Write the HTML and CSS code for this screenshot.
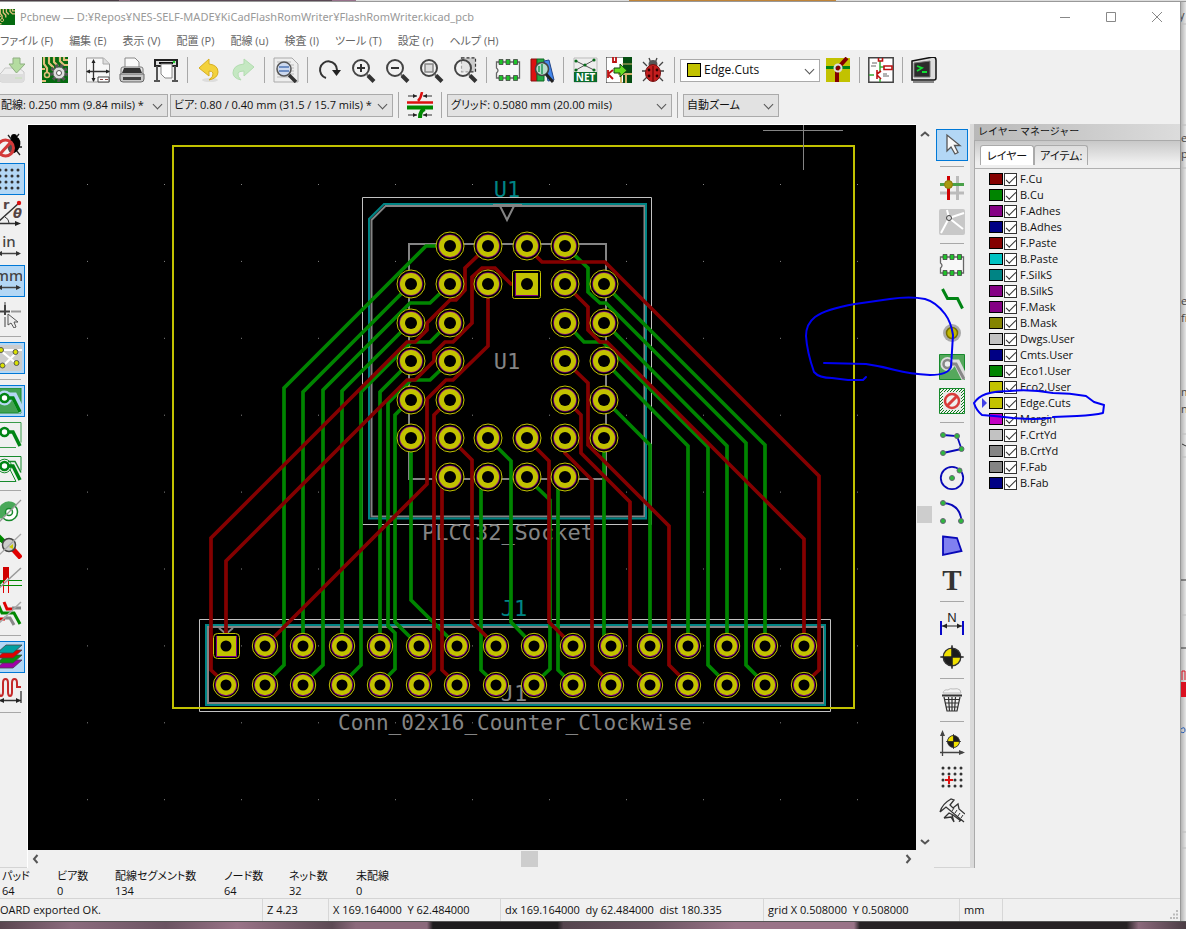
FILE: index.html
```html
<!DOCTYPE html>
<html lang="ja">
<head>
<meta charset="utf-8">
<title>Pcbnew</title>
<link rel="stylesheet" href="styles.css">
</head>
<body>
<svg class="defs" aria-hidden="true">
  <defs>
    <symbol id="lens" viewBox="0 0 26 26"><circle cx="11" cy="11" r="8" fill="#f3f3f3" fill-opacity=".6" stroke="#444" stroke-width="2"/><path d="M16.500 17l2 2" stroke="#777" stroke-width="2"/><path d="M18 18.500l6 6" stroke="#333" stroke-width="4"/></symbol>
    <symbol id="chip" viewBox="0 0 26 26"><path d="M1.500 5h23v16h-23v-5q3-2.500 0-5z" fill="#f8f8f8" stroke="#666" stroke-width="1.300"/><g fill="#1fc32a" stroke="#444" stroke-width=".8"><path d="M4 2.500h4v5h-4zM11 2.500h4v5h-4zM18.500 2.500h4v5h-4zM4 18.500h4v5h-4zM11 18.500h4v5h-4zM18.500 18.500h4v5h-4z"/></g></symbol>
    <symbol id="target" viewBox="0 0 20 20"><circle cx="10" cy="10" r="8" fill="#1c1c1c"/><path d="M10 10V2a8 8 0 0 0-8 8zM10 10v8a8 8 0 0 0 8-8z" fill="#f0e000"/><circle cx="10" cy="10" r="8" fill="none" stroke="#333" stroke-width="1.200"/><path d="M10-1v22M-1 10h22" stroke="#222" stroke-width="1"/></symbol>
    <symbol id="pointer" viewBox="0 0 26 26"><path d="M8 3v16l4-4 4 7 3-1.500-3.500-7H21z" fill="#f7f7f7" stroke="#555" stroke-width="1.300"/></symbol>
    <symbol id="pcb" viewBox="0 0 26 26"><path fill="#056a10" d="M0 0h26v26H0z"/><path d="M2 0v7l3 4v8M7 0v6l4 4v4M12 0v5l4 4M18 0v4l4 4h4M22 0v3h4M0 12h3M0 24h4" fill="none" stroke="#e1c07c" stroke-width="2.200"/><circle cx="5" cy="18" r="2.500" fill="#056a10" stroke="#e1c07c" stroke-width="1.500"/></symbol>
    <symbol id="zonetrack" viewBox="0 0 26 26"><circle cx="8.500" cy="10" r="4" fill="#fff" stroke="#008414" stroke-width="2.600"/><path d="M13 10h4l7 14" fill="none" stroke="#008414" stroke-width="3.500"/></symbol>
    <g id="pad"><circle cx="15" cy="15" r="14" fill="#000" stroke="#c2c200"/><circle cx="15" cy="15" r="11.800" fill="#840084"/><circle cx="15" cy="15" r="11" fill="#c2c200"/><circle cx="15" cy="15" r="6" fill="#000"/></g>
    <g id="hole"><circle cx="15" cy="15" r="12.700" fill="#000" stroke="#c2c200"/><circle cx="15" cy="15" r="11" fill="#840084"/><circle cx="15" cy="15" r="10.200" fill="#c2c200"/><circle cx="15" cy="15" r="5.500" fill="#000"/></g>
    <pattern id="grid" x="87" y="184" width="77" height="76.900" patternUnits="userSpaceOnUse"><path fill="#848484" d="M0 0h1v1H0z"/></pattern>
    <pattern id="hatch" width="3" height="3" patternUnits="userSpaceOnUse"><path d="M0 3L3 0" stroke="#0a7a1a" stroke-width="1"/></pattern>
  </defs>
</svg>

<div class="desktop-top"></div>
<main class="window">
  <header class="titlebar">
    <svg class="app-icon" viewBox="0 0 26 26" aria-hidden="true"><use href="#pcb"/></svg>
    <h1>Pcbnew — D:¥Repos¥NES-SELF-MADE¥KiCadFlashRomWriter¥FlashRomWriter.kicad_pcb</h1>
    <div class="caption-buttons">
      <button aria-label="最小化"><svg viewBox="0 0 12 12"><path d="M1 6.500h10"/></svg></button>
      <button aria-label="最大化"><svg viewBox="0 0 12 12"><path d="M1.500 1.500h9v9h-9z"/></svg></button>
      <button aria-label="閉じる"><svg viewBox="0 0 12 12"><path d="M1 1l10 10M11 1L1 11"/></svg></button>
    </div>
  </header>
  <nav class="menubar">
    <button>ファイル (F)</button><button>編集 (E)</button><button>表示 (V)</button><button>配置 (P)</button><button>配線 (u)</button><button>検査 (I)</button><button>ツール (T)</button><button>設定 (r)</button><button>ヘルプ (H)</button>
  </nav>

  <div class="toolbar main-tools">
    <button class="tool" aria-label="保存"><svg viewBox="0 0 26 26"><path d="M3 15l3-4h14l5 4v8q0 2-2 2H3q-2 0-2-2v-6z" fill="#eee" stroke="#c8c8c8"/><path d="M1 17h24v6q0 2-2 2H3q-2 0-2-2z" fill="#ddd"/><path d="M14 1h7v6h5l-8.500 9L10 7h4z" fill="#b4dca0" stroke="#8fae82"/><path d="M16 21h7" stroke="#c4e4b4"/></svg></button>
    <span class="sep"></span>
    <button class="tool" aria-label="基板の設定"><svg viewBox="0 0 26 26"><use href="#pcb"/><circle cx="17" cy="16" r="7.500" fill="none" stroke="#555" stroke-width="3" stroke-dasharray="3 2.200"/><circle cx="17" cy="16" r="6" fill="#ddd" stroke="#666"/><circle cx="17" cy="16" r="2.500" fill="#fff" stroke="#555"/></svg></button>
    <span class="sep"></span>
    <button class="tool" aria-label="ページ設定"><svg viewBox="0 0 26 26"><path d="M1.500 1h17l6 6v18h-23z" fill="#f7f7f7" stroke="#999"/><path d="M18 1v6h6" fill="#ddd" stroke="#aaa"/><path d="M8.500 4v20M2 14.500h22" stroke="#333" stroke-width="1.300"/><path d="M8.500 2l-2 4h4zM8.500 25l-2-4h4zM1 14.500l4-2v4zM25 14.500l-4-2v4z" fill="#222"/><path d="M13 20h11v5H13z" fill="#fff" stroke="#444"/><path d="M15 22.500h3M20 22.500h3" stroke="#844"/></svg></button>
    <button class="tool" aria-label="印刷"><svg viewBox="0 0 26 26"><path d="M6 12V1h10l4 4v7z" fill="#fafafa" stroke="#888"/><path d="M2 12q0-2 2-2h18q2 0 2 2v9H2z" fill="#e4e4e4" stroke="#777"/><path d="M5 11h16l2 5H3z" fill="#333"/><path d="M1 17h24v5q0 3-3 3H4q-3 0-3-3z" fill="#c8c8c8" stroke="#666"/><path d="M4 20h18v3H4z" fill="#444"/></svg></button>
    <button class="tool" aria-label="プロット"><svg viewBox="0 0 26 26"><path d="M2 3h22v6H2z" fill="#ddd" stroke="#222" stroke-width="2"/><path d="M6 6h14" stroke="#111" stroke-width="2"/><path d="M4 9v14M22 9v14M1 24h6M19 24h6" stroke="#555" stroke-width="2"/><path d="M8 7h11v14h-7l-4-4z" fill="#fff" stroke="#888"/><circle cx="21" cy="5" r="1.300" fill="#2c3"/></svg></button>
    <span class="sep"></span>
    <button class="tool" aria-label="元に戻す"><svg viewBox="0 0 26 26"><ellipse cx="14" cy="23" rx="8" ry="2" fill="#ddd"/><path d="M3 11l10-9v5q9 1 9 8 0 6-9 8 5-4 4-7-1-2-4-2v5z" fill="#f3d23c" stroke="#d6ae20"/></svg></button>
    <button class="tool" aria-label="やり直し"><svg viewBox="0 0 26 26"><path d="M24 10L14 2v5Q3 8 3 16q0 5 8 7-4-4-3-7 1-2 6-2v5z" fill="#c5e8c2" stroke="#b2dcb0"/></svg></button>
    <span class="sep"></span>
    <button class="tool" aria-label="検索"><svg viewBox="0 0 26 26"><path d="M1 1h18l6 6v18H1z" fill="#eee" stroke="#aaa"/><path d="M4 5h14M4 8h17M4 11h17M4 14h17M4 17h17M4 20h12" stroke="#bbb"/><circle cx="11" cy="12" r="7" fill="#cdd9ee" stroke="#555" stroke-width="1.500"/><path d="M6 10h10M6 14h10" stroke="#6f8fc4" stroke-width="2"/><path d="M16 18l7 7" stroke="#333" stroke-width="3.500"/></svg></button>
    <span class="sep"></span>
    <button class="tool" aria-label="再描画"><svg viewBox="0 0 26 26"><path d="M10 21a8.500 8.500 0 1 1 11-8" fill="none" stroke="#333" stroke-width="2"/><path d="M16 13h9l-4.500 6z" fill="#222"/></svg></button>
    <button class="tool" aria-label="ズームイン"><svg viewBox="0 0 26 26"><use href="#lens"/><path d="M7 11h8M11 7v8" stroke="#333" stroke-width="2"/></svg></button>
    <button class="tool" aria-label="ズームアウト"><svg viewBox="0 0 26 26"><use href="#lens"/><path d="M7 11h8" stroke="#333" stroke-width="2"/></svg></button>
    <button class="tool" aria-label="全体表示"><svg viewBox="0 0 26 26"><use href="#lens"/><path d="M7 7h8v8H7z" fill="#ddd" stroke="#888" stroke-width="1.500"/></svg></button>
    <button class="tool" aria-label="選択範囲にズーム"><svg viewBox="0 0 26 26"><path d="M9.500.8h14v14h-14z" fill="#ccc" stroke="#333" stroke-width="1.200" stroke-dasharray="3 2"/><use href="#lens"/></svg></button>
    <span class="sep"></span>
    <button class="tool" aria-label="フットプリントエディター"><svg viewBox="0 0 26 26"><use href="#chip"/></svg></button>
    <button class="tool" aria-label="フットプリントブラウザー"><svg viewBox="0 0 26 26"><path d="M2 2h6v22H2z" fill="#d11" stroke="#811"/><path d="M8 2h7v22H8z" fill="#2a4" stroke="#162"/><path d="M15 4l5-1 5 20-6 1z" fill="#48e" stroke="#248"/><circle cx="13" cy="12" r="6.500" fill="#b8dccc" stroke="#444" stroke-width="1.600"/><path d="M13 7v10M10 9v6" stroke="#295" stroke-width="1.500"/><path d="M17 17l7 8" stroke="#222" stroke-width="3"/></svg></button>
    <span class="sep"></span>
    <button class="tool" aria-label="ネットリスト"><svg viewBox="0 0 26 26"><path d="M2 1h23v24H2z" fill="#eee" stroke="#bbb"/><path d="M4 4l18 9M4 13L22 3" stroke="#555"/><g fill="#096b1b"><circle cx="4" cy="4" r="1.600"/><circle cx="22" cy="3" r="1.600"/><circle cx="4" cy="13" r="1.600"/><circle cx="22" cy="13" r="1.600"/><circle cx="13" cy="8" r="1.600"/></g><path d="M2 15h23v10H2z" fill="#096b2b"/><text x="13.500" y="23.500" class="net-label">NET</text></svg></button>
    <button class="tool" aria-label="回路図から更新"><svg viewBox="0 0 26 26"><path d="M0 0h26v26H0z" fill="#fff" stroke="#222"/><path d="M17 0h9v26h-9z" fill="#064f12"/><path d="M12 17h14M15 18v8M20 18v8" stroke="#d3b36d" stroke-width="2"/><path d="M7 0v5h3V0M2 13v8M2 17l5-4M2 17l5 5" fill="none" stroke="#b11" stroke-width="1.800"/><path d="M16 7h10" stroke="#d3b36d"/><path d="M8 11h6V7l7 6.500-7 6.500v-4H8z" fill="#6d2" stroke="#141"/></svg></button>
    <button class="tool" aria-label="デザインルールチェック"><svg viewBox="0 0 26 26"><path d="M9 1l2 5M17 1l-2 5M7 9L3 5M19 9l4-4M6 14H2M20 14h4M7 20l-4 4M19 20l4 4" stroke="#444" stroke-width="1.300"/><ellipse cx="13" cy="7" rx="4.500" ry="4" fill="#555"/><ellipse cx="13" cy="16" rx="7.500" ry="8.500" fill="#c41e1e" stroke="#711"/><path d="M13 9v15" stroke="#500"/><g fill="#300"><circle cx="9" cy="13" r="1.400"/><circle cx="17" cy="13" r="1.400"/><circle cx="9" cy="19" r="1.400"/><circle cx="17" cy="19" r="1.400"/></g></svg></button>
    <span class="sep"></span>
    <span class="combo layer-combo"><i class="swatch c-edge"></i><select aria-label="作業レイヤー"><option>Edge.Cuts</option></select></span>
    <button class="tool" aria-label="レイヤーペア"><svg viewBox="0 0 26 26"><path d="M1 1h24v24H1z" fill="#c2c200"/><path d="M1 10.500h24" stroke="#008414" stroke-width="3"/><path d="M12 25V12L22 1" fill="none" stroke="#840000" stroke-width="4"/><circle cx="13" cy="11" r="3.500" fill="none" stroke="#ddd" stroke-width="2"/></svg></button>
    <span class="sep"></span>
    <button class="tool" aria-label="回路図エディター"><svg viewBox="0 0 26 26"><path d="M.8.800h24.400v24.400H.8z" fill="#fff" stroke="#444" stroke-width="1.500"/><path d="M12 4v6M12 10h4M1 18h5M12 22v3M12 10v4" stroke="#3a3" stroke-width="1.500"/><path d="M10.500 1v3h4V1M16 9h8v3.500h-8zM9 13v9M9 17l4-3M9 18l4 4" fill="none" stroke="#b11" stroke-width="1.600"/><path d="M4 6h5M3 9h5M15 17h4M15 19h6" stroke="#666"/></svg></button>
    <span class="sep"></span>
    <button class="tool" aria-label="コンソール"><svg viewBox="0 0 26 26"><path d="M1 4l21-4q3 0 3 3v18q0 2-2 2H1z" fill="#ddd" stroke="#111" stroke-width="1.500"/><path d="M3 6l16-2v16H3z" fill="#2c2c2c" stroke="#777"/><path d="M6 9l5 2-5 3M11 15h5" fill="none" stroke="#1d3" stroke-width="1.800"/><path d="M2 25h21" stroke="#888" stroke-width="2"/></svg></button>
  </div>

  <div class="toolbar sub-tools">
    <span class="combo track-combo"><select aria-label="配線幅"><option>配線: 0.250 mm (9.84 mils) *</option></select></span>
    <span class="combo via-combo"><select aria-label="ビアサイズ"><option>ビア: 0.80 / 0.40 mm (31.5 / 15.7 mils) *</option></select></span>
    <span class="sep"></span>
    <button class="tool" aria-label="自動配線幅"><svg viewBox="0 0 26 26"><path d="M0 10.500h26" stroke="#d11" stroke-width="2.500"/><path d="M15 0q-1 6-4 9" fill="none" stroke="#d11" stroke-width="2.500"/><path d="M0 15.500h26" stroke="#080" stroke-width="4"/><path d="M18 17q-5 1-5 9" fill="none" stroke="#080" stroke-width="4"/><path d="M1 4h9M16 4h9M1 23h9M16 23h9" stroke="#333"/><path d="M10 4L6 2v4zM16 4l4-2v4zM10 23l-4-2v4zM16 23l4-2v4z" fill="#222"/></svg></button>
    <span class="sep"></span>
    <span class="combo grid-combo"><select aria-label="グリッド"><option>グリッド: 0.5080 mm (20.00 mils)</option></select></span>
    <span class="sep"></span>
    <span class="combo zoom-combo"><select aria-label="ズーム"><option>自動ズーム</option></select></span>
  </div>

  <section class="workspace">
    <div class="side-tools left-tools">
      <button class="tool" aria-label="DRCオフ"><svg viewBox="0 0 26 26"><path d="M12 3l4 5M23 2l-4 5M24 9l-4 3M26 15h-5M24 23l-4-5" stroke="#222" stroke-width="1.300"/><ellipse cx="18" cy="13" rx="6" ry="8.500" transform="rotate(20 18 13)"/><circle cx="18" cy="5" r="3"/><circle cx="9.500" cy="16" r="8" fill="#fff" fill-opacity=".3" stroke="#d33a3a" stroke-width="3"/><path d="M15 10L4 22" stroke="#d33a3a" stroke-width="3"/></svg></button>
      <button class="tool on" aria-label="グリッド表示"><svg viewBox="0 0 26 26"><g class="dots"><path d="M4 4h19M4 10h19M4 16h19M4 22h19"/></g></svg></button>
      <button class="tool" aria-label="極座標"><svg viewBox="0 0 26 26"><path d="M1 23L23 3M1 23.500h20" stroke="#333" stroke-width="1.400"/><path d="M25 23.500l-6-2.500v5z" fill="#222"/><path d="M9 17q4 2 4 6" fill="none" stroke="#333"/><circle cx="23" cy="3" r="2.200" fill="#d11"/><text x="7" y="9" class="polar">r</text><text x="17" y="18" class="polar theta">θ</text></svg></button>
      <button class="tool" aria-label="インチ"><svg viewBox="0 0 26 26"><text x="13" y="13" class="unit">in</text><path d="M3 19.500h20" stroke="#444" stroke-width="1.500"/><path d="M25 19.500l-5-2.500v5zM1 19.500l5-2.500v5z" fill="#333"/></svg></button>
      <button class="tool on" aria-label="ミリメートル"><svg viewBox="0 0 26 26"><text x="13" y="13" class="unit">mm</text><path d="M3 19.500h20" stroke="#444" stroke-width="1.500"/><path d="M25 19.500l-5-2.500v5zM1 19.500l5-2.500v5z" fill="#333"/></svg></button>
      <button class="tool" aria-label="カーソル形状"><svg viewBox="0 0 26 26"><path d="M9 3v10M3 9.500h11" stroke="#444" stroke-width="2"/><path d="M9 0v3M9 15v10M15 9.500h10" stroke="#999" stroke-width="2"/><path d="M12 12v11l3-2 3 5 2-1-2-5h4z" fill="#eee" stroke="#555"/></svg></button>
      <span class="sep"></span>
      <button class="tool on" aria-label="ラッツネスト"><svg viewBox="0 0 26 26"><rect width="26" height="26" rx="3" fill="#ccc"/><path d="M4 5h22M4 5l17 14M7 21L21 7" stroke="#fff" stroke-width="2.200"/><g fill="#d9e000" stroke="#555"><circle cx="5" cy="5" r="2.500"/><circle cx="19.500" cy="7" r="2.500"/><circle cx="6.500" cy="20.500" r="2.500"/><circle cx="20.500" cy="18" r="2.500"/></g></svg></button>
      <span class="sep"></span>
      <button class="tool on" aria-label="塗りつぶし表示"><svg viewBox="0 0 26 26"><path d="M0 0h25v25H0z" fill="#42a152" stroke="#178a2c"/><circle cx="8.500" cy="10" r="7.500" fill="#b5d7f3"/><path d="M12 8h6l8 16" fill="none" stroke="#b5d7f3" stroke-width="7"/><use href="#zonetrack"/></svg></button>
      <button class="tool" aria-label="塗りつぶし非表示"><svg viewBox="0 0 26 26"><path d="M.5.500h24.500v20M0 25.500h20" fill="none" stroke="#3a9b4a"/><use href="#zonetrack"/></svg></button>
      <button class="tool" aria-label="塗りつぶし輪郭"><svg viewBox="0 0 26 26"><path d="M.5.500h24.500v14M0 25.500h20l-6-12" fill="none" stroke="#178a2c"/><circle cx="8.500" cy="10" r="6.800" fill="none" stroke="#178a2c"/><path d="M12 5.500h7l6 11" fill="none" stroke="#178a2c" stroke-width="1.500"/><use href="#zonetrack"/></svg></button>
      <span class="sep"></span>
      <button class="tool" aria-label="パッド輪郭"><svg viewBox="0 0 26 26"><circle cx="13" cy="13" r="8.500" fill="#fff" stroke="#178a2c" stroke-width="1.500"/><path d="M5 20A9 9 0 0 1 21 6z" fill="#4aa85a"/><circle cx="13" cy="13" r="3.500" fill="#fff" stroke="#178a2c" stroke-width="1.500"/><path d="M1 25L25 1" stroke="#999" stroke-width="1.300"/></svg></button>
      <button class="tool" aria-label="ビア輪郭"><svg viewBox="0 0 26 26"><path d="M0 1l9 9" stroke="#080" stroke-width="5"/><path d="M15 14l10 11" stroke="#e00000" stroke-width="5"/><circle cx="13" cy="12" r="6.500" fill="#ccc" stroke="#444" stroke-width="1.500"/><path d="M13 14l4-3v5z" fill="#cc0"/><path d="M1 24L25 1" stroke="#aaa" stroke-width="1.300"/></svg></button>
      <button class="tool" aria-label="配線輪郭"><svg viewBox="0 0 26 26"><path d="M7 0h6v9l-6 7z" fill="#d00000"/><path d="M0 13h9l-5 5H0z" fill="#080"/><path d="M7.500 14v12M12.500 9v17" stroke="#d00"/><path d="M12 13.500h14M4 18.500h22" stroke="#080"/><path d="M1 23L25 1" stroke="#999" stroke-width="1.500"/></svg></button>
      <button class="tool" aria-label="ハイコントラスト"><svg viewBox="0 0 26 26"><path d="M8 1l3 7h6" fill="none" stroke="#d00" stroke-width="3"/><path d="M16 7h9" stroke="#888" stroke-width="3"/><path d="M2 3l4 9h12l6 11" fill="none" stroke="#080" stroke-width="3"/><path d="M1 18h8" stroke="#d00" stroke-width="3"/><path d="M8 17h6l4 7" fill="none" stroke="#888" stroke-width="3"/><path d="M1 24L25 1" stroke="#aaa" stroke-width="1.500"/></svg></button>
      <span class="sep"></span>
      <button class="tool on" aria-label="レイヤーマネージャー"><svg viewBox="0 0 26 26"><g stroke="#444" stroke-width=".8"><path d="M1 24l9-8h16l-9 8z" fill="#a000a8"/><path d="M1 19l9-8h16l-9 8z" fill="#089010"/><path d="M1 14l9-8h16l-9 8z" fill="#e00000"/><path d="M1 9l9-8h16l-9 8z" fill="#00a0a0"/></g></svg></button>
      <button class="tool" aria-label="配線長調整"><svg viewBox="0 0 26 26"><path d="M0 9h3v5q0 4 2 4t2-4V5q0-4 2.500-4T12 5v9q0 4 2 4t2-4V5q0-4 2.500-4T21 5v4h4" fill="none" stroke="#c42a2a" stroke-width="2"/><path d="M1 22.500h24M25 13v12" stroke="#333" stroke-width="1.300"/><path d="M25 22.500l-5-2.500v5zM3 22.500l5-2.500v5z" fill="#222"/></svg></button>
      <span class="sep"></span>
    </div>

    <div class="board-area">
      <svg class="board" viewBox="28 125 888 725" preserveAspectRatio="xMinYMin slice" role="img" aria-label="基板">
        <path fill="url(#grid)" d="M28 125h888v725H28z"/>
        <g fill="none" stroke="#848484" stroke-width="2">
          <path d="M409 244h197v235H409z"/>
          <path d="M385.500 206H644.500V516.500H371.500V220z"/>
          <path d="M500 206l7 14 7-14"/>
          <path d="M208 627h616v76H208z"/>
          <path d="M219 628l7 6 7-6"/>
        </g>
        <g fill="none" stroke="#008484" stroke-width="2">
          <path d="M384 204H646V518.500H369V219z"/>
          <path d="M206 625h619v80H206z"/>
        </g>
        <path d="M493 205h29" stroke="#848484" stroke-width="2"/>
        <g fill="none" stroke="#c2c2c2"><path d="M362.500 197.500h289v327h-289z"/><path d="M199.500 619.500h631v92h-631z"/></g>
        <g class="board-text">
          <text x="507" y="197" class="silk">U1</text>
          <text x="507" y="369">U1</text>
          <text x="508" y="540">PLCC32_Socket</text>
          <text x="514" y="616" class="silk">J1</text>
          <text x="514" y="701">J1</text>
          <text x="515" y="730" class="conn">Conn_02x16_Counter_Clockwise</text>
        </g>
        <path d="M173 146h681v562H173z" fill="none" stroke="#c2c200" stroke-width="2"/>
        <g fill="none" stroke="#008400" stroke-width="3.700">
          <path d="M450 246H426L284 388V665L265 684"/>
          <path d="M411 284L303 392V646"/>
          <path d="M450 284L430 303H410L323 390V665L303 684"/>
          <path d="M411 322L342 391V646"/>
          <path d="M450 322L430 342H411L361 392V665L342 684"/>
          <path d="M411 361L380 392V646"/>
          <path d="M450 361L430 380H411L388 403V626L395 633V669L380 684"/>
          <path d="M411 399L395 415V622L419 646"/>
          <path d="M411 438V600L457 646"/>
          <path d="M488 477L481 484V670L496 684"/>
          <path d="M488 438L511 461V622L534 646"/>
          <path d="M526 477L550 500V669L534 684"/>
          <path d="M565 477L558 484V670L573 684"/>
          <path d="M604 438V638L611 646"/>
          <path d="M604 399L650 445V646"/>
          <path d="M604 361L688 446V646"/>
          <path d="M565 322L584 342H603L708 447V665L727 684"/>
          <path d="M604 322L727 446V646"/>
          <path d="M565 246L588 268V292L600 303H606L746 443V665L765 684"/>
          <path d="M604 284L765 445V646"/>
        </g>
        <g fill="none" stroke="#840000" stroke-width="3.700">
          <path d="M488 246L465 268V290L456 300H450L427 323V330L415 342H407L211 538V670L226 684"/>
          <path d="M526 284H511L495 268H482L472 277V323L453 342H445L434 353V361L415 380H407L226 561V646"/>
          <path d="M488 284V346L453 380H446L427 399V484L265 646"/>
          <path d="M450 399L434 415V670L419 684"/>
          <path d="M450 477L442 484V670L457 684"/>
          <path d="M450 438L472 460V622L496 646"/>
          <path d="M526 438L549 461V622L573 646"/>
          <path d="M565 438V453L592 480V665L611 684"/>
          <path d="M565 399L581 415V453L630 502V665L650 684"/>
          <path d="M565 361L588 383V445L669 526V665L688 684"/>
          <path d="M565 284L588 307V330L600 342H607L804 539V646"/>
          <path d="M526 246L542 262H605L819 476V670L804 684"/>
        </g>
        <g>
          <use href="#pad" x="435" y="231"/><use href="#pad" x="473" y="231"/><use href="#pad" x="512" y="231"/><use href="#pad" x="550" y="231"/>
          <use href="#pad" x="396" y="269"/><use href="#pad" x="435" y="269"/><use href="#pad" x="473" y="269"/><use href="#pad" x="550" y="269"/><use href="#pad" x="589" y="269"/>
          <use href="#pad" x="396" y="308"/><use href="#pad" x="435" y="308"/><use href="#pad" x="550" y="308"/><use href="#pad" x="589" y="308"/>
          <use href="#pad" x="396" y="346"/><use href="#pad" x="435" y="346"/><use href="#pad" x="550" y="346"/><use href="#pad" x="589" y="346"/>
          <use href="#pad" x="396" y="385"/><use href="#pad" x="435" y="385"/><use href="#pad" x="550" y="385"/><use href="#pad" x="589" y="385"/>
          <use href="#pad" x="396" y="423"/><use href="#pad" x="435" y="423"/><use href="#pad" x="473" y="423"/><use href="#pad" x="512" y="423"/><use href="#pad" x="550" y="423"/><use href="#pad" x="589" y="423"/>
          <use href="#pad" x="435" y="462"/><use href="#pad" x="473" y="462"/><use href="#pad" x="512" y="462"/><use href="#pad" x="550" y="462"/>
        </g>
        <g><rect x="512.500" y="270.500" width="28" height="28" rx="2" stroke="#c2c200"/><path d="M515 273h23v23h-23z" fill="#840084"/><path d="M516 273h22v22h-22z" fill="#c2c200"/><circle cx="527" cy="284" r="6"/></g>
        <g><rect x="213.500" y="633.500" width="26" height="25" rx="4" stroke="#c2c200"/><path d="M216 636h21v21h-21z" fill="#840084"/><path d="M217 636h19v20h-19z" fill="#c2c200"/><circle cx="226" cy="646" r="5.500"/></g>
        <g>
          <use href="#hole" x="250" y="631"/><use href="#hole" x="288" y="631"/><use href="#hole" x="327" y="631"/><use href="#hole" x="365" y="631"/><use href="#hole" x="404" y="631"/><use href="#hole" x="442" y="631"/><use href="#hole" x="481" y="631"/><use href="#hole" x="519" y="631"/><use href="#hole" x="558" y="631"/><use href="#hole" x="596" y="631"/><use href="#hole" x="635" y="631"/><use href="#hole" x="673" y="631"/><use href="#hole" x="712" y="631"/><use href="#hole" x="750" y="631"/><use href="#hole" x="789" y="631"/>
          <use href="#hole" x="211" y="670"/><use href="#hole" x="250" y="670"/><use href="#hole" x="288" y="670"/><use href="#hole" x="327" y="670"/><use href="#hole" x="365" y="670"/><use href="#hole" x="404" y="670"/><use href="#hole" x="442" y="670"/><use href="#hole" x="481" y="670"/><use href="#hole" x="519" y="670"/><use href="#hole" x="558" y="670"/><use href="#hole" x="596" y="670"/><use href="#hole" x="635" y="670"/><use href="#hole" x="673" y="670"/><use href="#hole" x="712" y="670"/><use href="#hole" x="750" y="670"/><use href="#hole" x="789" y="670"/>
        </g>
        <path d="M763 130.500h80M803.500 125v45" stroke="#848484"/>
      </svg>
      <div class="scroll hscroll">
        <button aria-label="左へ"><svg viewBox="0 0 10 10"><path d="M6.500 1L3 5l3.500 4"/></svg></button><span class="before"></span><i class="thumb"></i><span class="after"></span><button aria-label="右へ"><svg viewBox="0 0 10 10"><path d="M3.500 1L7 5 3.500 9"/></svg></button>
      </div>
    </div>
    <div class="scroll vscroll">
      <button aria-label="上へ"><svg viewBox="0 0 10 10"><path d="M1 7l4-3.500L9 7"/></svg></button><span class="before"></span><i class="thumb"></i><span class="after"></span><button aria-label="下へ"><svg viewBox="0 0 10 10"><path d="M1 3l4 3.500L9 3"/></svg></button>
    </div>

    <div class="side-tools right-tools">
      <button class="tool on" aria-label="選択"><svg viewBox="0 0 26 26"><use href="#pointer"/></svg></button>
      <span class="sep"></span>
      <button class="tool" aria-label="ネットのハイライト"><svg viewBox="0 0 26 26"><path d="M18.500 1v24M1 18h24" stroke="#bbb" stroke-width="3"/><path d="M9.500 1v24" stroke="#d00000" stroke-width="3"/><path d="M1 9.500h24" stroke="#4aa14a" stroke-width="3"/><circle cx="9.500" cy="9.500" r="4" fill="#a8980e" stroke="#8a7a10"/></svg></button>
      <button class="tool" aria-label="ローカルラッツネスト"><svg viewBox="0 0 26 26"><rect width="26" height="26" rx="2" fill="#c8c8c8"/><path d="M10 9L8 1M10 9l15-5M10 9L2 24M10 9l14 11" stroke="#fff" stroke-width="2"/><circle cx="10" cy="9" r="2.500" fill="#ddd" stroke="#444"/></svg></button>
      <span class="sep"></span>
      <button class="tool" aria-label="フットプリントの追加"><svg viewBox="0 0 26 26"><use href="#chip"/></svg></button>
      <button class="tool" aria-label="配線"><svg viewBox="0 0 26 26"><path d="M3.500 3l5 9.500h10l5 10" fill="none" stroke="#008414" stroke-width="3"/></svg></button>
      <button class="tool" aria-label="ビアの追加"><svg viewBox="0 0 26 26"><circle cx="13" cy="13" r="9" fill="#a9a9a9"/><circle cx="13" cy="13" r="5.500" fill="#c2b800" stroke="#776f00" stroke-width="1.500"/></svg></button>
      <button class="tool" aria-label="塗りつぶしゾーン"><svg viewBox="0 0 26 26"><path d="M.5.500h25v25H.5z" fill="#55a85c" stroke="#178a2c"/><circle cx="8.500" cy="10" r="7" fill="#ddd"/><path d="M12 9h6l8 16" fill="none" stroke="#ddd" stroke-width="7"/><circle cx="8.500" cy="10" r="4" fill="#eee" stroke="#888" stroke-width="2.500"/><path d="M12 10h5l8 15" fill="none" stroke="#888" stroke-width="3"/></svg></button>
      <button class="tool" aria-label="キープアウト"><svg viewBox="0 0 26 26"><path d="M.5.500h25v25H.5z" fill="url(#hatch)" stroke="#178a2c"/><path d="M4 4h18v18H4z" fill="#e8e8e8"/><circle cx="13" cy="13" r="7" fill="#eee" stroke="#d93c3c" stroke-width="2.500"/><path d="M18 8L8 18" stroke="#d93c3c" stroke-width="3"/></svg></button>
      <span class="sep"></span>
      <button class="tool" aria-label="線の追加"><svg viewBox="0 0 26 26"><path d="M4 4l14 1 4.500 13L4 22" fill="none" stroke="#0808b8" stroke-width="1.800"/><g class="nodes"><circle cx="4" cy="4" r="2.500"/><circle cx="18" cy="5" r="2.500"/><circle cx="22.500" cy="18" r="2.500"/><circle cx="4" cy="22" r="2.500"/></g></svg></button>
      <button class="tool" aria-label="円の追加"><svg viewBox="0 0 26 26"><circle cx="13" cy="13" r="11.200" fill="none" stroke="#0808b8" stroke-width="1.800"/><g class="nodes"><circle cx="13" cy="13" r="2.500"/><circle cx="20.500" cy="5.500" r="2.500"/></g></svg></button>
      <button class="tool" aria-label="円弧の追加"><svg viewBox="0 0 26 26"><path d="M4 4q17 1 18.500 18" fill="none" stroke="#0808b8" stroke-width="1.800"/><g class="nodes"><circle cx="4" cy="4" r="2.500"/><circle cx="4" cy="22" r="2.500"/><circle cx="22" cy="22" r="2.500"/></g></svg></button>
      <button class="tool" aria-label="ポリゴンの追加"><svg viewBox="0 0 26 26"><path d="M4 3.500l14 1.500 4.500 13L4 22z" fill="#8080f0" stroke="#0808b8" stroke-width="1.800"/></svg></button>
      <button class="tool" aria-label="テキストの追加"><svg viewBox="0 0 26 26"><text x="13" y="23" class="big-t">T</text></svg></button>
      <span class="sep"></span>
      <button class="tool" aria-label="寸法線の追加"><svg viewBox="0 0 26 26"><path d="M2 11v14M24 11v14" stroke="#0808c8" stroke-width="2"/><path d="M3 16h20" stroke="#222"/><path d="M3 16l5-2.500v5zM23 16l-5-2.500v5z" fill="#222"/><text x="13" y="12" class="dim">N</text></svg></button>
      <button class="tool" aria-label="ターゲットの追加"><svg viewBox="0 0 26 26"><use href="#target" x="2" y="2" width="22" height="22"/><path d="M13 1v24M1 13h24" stroke="#222"/></svg></button>
      <span class="sep"></span>
      <button class="tool" aria-label="削除"><svg viewBox="0 0 26 26"><path d="M4 6q1-4 5-3 2-2 5-1 5-1 7 1l1 3z" fill="#f4f4f4" stroke="#bbb"/><path d="M3 8.500h20" stroke="#333" stroke-width="2"/><path d="M5 10l3 14h10l3-14M5.500 12.500h15M6 16h14M7 20h12M9.500 10l1 14M13 10v14M16.500 10l-1 14" fill="none" stroke="#333" stroke-width="1.200"/></svg></button>
      <span class="sep"></span>
      <button class="tool" aria-label="原点の設定"><svg viewBox="0 0 26 26"><path d="M3.500 3v23M1 22.500h23" stroke="#444" stroke-width="1.300"/><path d="M3.500 0L1 6h5zM26 22.500l-6-2.500v5z" fill="#444"/><use href="#target" x="7" y="4" width="15" height="15"/></svg></button>
      <button class="tool" aria-label="グリッド原点"><svg viewBox="0 0 26 26"><g class="dots"><path d="M4 4h19M4 10h19M4 16h19M4 22h19"/></g><path d="M10 12v8M6 16h8" stroke="#d11" stroke-width="2"/></svg></button>
      <button class="tool" aria-label="計測"><svg viewBox="0 0 26 26"><path d="M1 14Q3 6 12 1l3 1-4 5 3 3 5-4 1 5 6 5M1 14l6-5 18 15M5 20l5-5 4 2 8 6M5 20l7-1 3 5-2-7" fill="none" stroke="#333" stroke-width="1.300"/><path d="M13 13l2-3M16 15l2-3M19 18l2-3M22 20l2-3M20 24l2-3" stroke="#333"/></svg></button>
    </div>

    <aside class="layers">
      <h2>レイヤー マネージャー</h2>
      <div class="tabs"><button class="active">レイヤー</button><button>アイテム:</button></div>
      <div class="layer-list">
        <label><i class="swatch" style="background:#840000"></i><input type="checkbox" checked>F.Cu</label>
        <label><i class="swatch" style="background:#008400"></i><input type="checkbox" checked>B.Cu</label>
        <label><i class="swatch" style="background:#840084"></i><input type="checkbox" checked>F.Adhes</label>
        <label><i class="swatch" style="background:#000084"></i><input type="checkbox" checked>B.Adhes</label>
        <label><i class="swatch" style="background:#840000"></i><input type="checkbox" checked>F.Paste</label>
        <label><i class="swatch" style="background:#00c2c2"></i><input type="checkbox" checked>B.Paste</label>
        <label><i class="swatch" style="background:#008484"></i><input type="checkbox" checked>F.SilkS</label>
        <label><i class="swatch" style="background:#840084"></i><input type="checkbox" checked>B.SilkS</label>
        <label><i class="swatch" style="background:#840084"></i><input type="checkbox" checked>F.Mask</label>
        <label><i class="swatch" style="background:#848400"></i><input type="checkbox" checked>B.Mask</label>
        <label><i class="swatch" style="background:#c2c2c2"></i><input type="checkbox" checked>Dwgs.User</label>
        <label><i class="swatch" style="background:#000084"></i><input type="checkbox" checked>Cmts.User</label>
        <label><i class="swatch" style="background:#008400"></i><input type="checkbox" checked>Eco1.User</label>
        <label><i class="swatch" style="background:#c2c200"></i><input type="checkbox" checked>Eco2.User</label>
        <label class="current"><i class="swatch" style="background:#c2c200"></i><input type="checkbox" checked>Edge.Cuts</label>
        <label><i class="swatch" style="background:#c200c2"></i><input type="checkbox" checked>Margin</label>
        <label><i class="swatch" style="background:#c2c2c2"></i><input type="checkbox" checked>F.CrtYd</label>
        <label><i class="swatch" style="background:#848484"></i><input type="checkbox" checked>B.CrtYd</label>
        <label><i class="swatch" style="background:#848484"></i><input type="checkbox" checked>F.Fab</label>
        <label><i class="swatch" style="background:#000084"></i><input type="checkbox" checked>B.Fab</label>
      </div>
    </aside>

    <svg class="ink" aria-hidden="true"><g transform="translate(0 -124)"><path d="M824 363L866 364Q880 366 895 370T930 375Q948 375 951 367L953 335Q951 322 945 314Q936 302 925 299Q910 296 890 299L855 304Q826 309 815 317Q806 324 806 336Q807 352 814 372Q819 378 832 378L848 380H863L866 377"/><path d="M1053 417L1077 416Q1095 415 1103 413L1104 405 1094 402 1086 396Q1070 393 1053 393 1030 389 1010 391 995 391 986 394 978 397 974 403 976 410 982 415 996 416 1013 418 1035 420 1050 418"/></g></svg>
  </section>

  <dl class="message-panel">
    <div><dt>パッド</dt><dd>64</dd></div>
    <div><dt>ビア数</dt><dd>0</dd></div>
    <div><dt>配線セグメント数</dt><dd>134</dd></div>
    <div><dt>ノード数</dt><dd>64</dd></div>
    <div><dt>ネット数</dt><dd>32</dd></div>
    <div><dt>未配線</dt><dd>0</dd></div>
  </dl>
  <footer class="statusbar">
    <span>OARD exported OK.</span><span>Z 4.23</span><span>X 169.164000&nbsp; Y 62.484000</span><span>dx 169.164000&nbsp; dy 62.484000&nbsp; dist 180.335</span><span>grid X 0.508000&nbsp; Y 0.508000</span><span>mm</span><span></span>
    <svg class="grip" viewBox="0 0 10 10" aria-hidden="true"><path d="M7 0h2v2H7zM4 3.500h2v2H4zM7 3.500h2v2H7zM1 7h2v2H1zM4 7h2v2H4zM7 7h2v2H7z"/></svg>
  </footer>
</main>
<svg class="desktop-right" aria-hidden="true">
  <path d="M0 22h5M0 123h5M0 166h5M0 432h5M0 455h5M0 613h5M0 830h5M0 846h5" stroke="#bbb"/>
  <path d="M0 578h5M0 646h5" stroke="#333"/>
  <path d="M0 680h5v15H0z" fill="#da1020"/><path d="M1 678v-9h3v9" fill="none" stroke="#da1020"/>
  <path d="M1 442l4 2" stroke="#333"/><path d="M0 727q4-3 4 1t-4 2" fill="none" stroke="#2458b0"/>
  <g class="scraps"><text x="-2" y="17">y</text><text x="0" y="140">e</text><text x="0" y="156">p</text><text x="0" y="303">e</text><text x="0" y="320">fi</text><text x="0" y="394">m</text><text x="0" y="411">n</text></g>
</svg>
<div class="desktop-bottom"></div>
</body>
</html>
```
FILE: styles.css
```css
* { box-sizing: border-box; }
body {
  margin: 0;
  height: 100vh;
  display: grid;
  grid-template: 2px minmax(0, 1fr) 8px / minmax(0, 1fr) 5px;
  background: #e8e8e8;
  color: #111;
  font: 11px/16px "Open Sans", "Noto Sans CJK JP", sans-serif;
  overflow: hidden;
}
button, select, input { font: inherit; color: inherit; margin: 0; }
button { background: none; border: 0; padding: 0; }
.defs { position: absolute; width: 0; height: 0; }

.desktop-top {
  grid-column: 1 / -1;
  border-bottom: 1px solid #999;
  background: linear-gradient(90deg, #4a3c44 0 10%, #8a6a7c 10% 11%, #5a4854 11% 28%, #96708a 28% 30%, #ddd 30% 53%, #c08438 53% 70.5%, #ddd 70.5%);
}
.desktop-right { width: 5px; height: 100%; background: linear-gradient(90deg, #b4b4b4, #e6e6e6); }
.scraps { font-size: 11px; fill: #444; }
.desktop-bottom {
  grid-column: 1 / -1;
  border-top: 1px solid #555;
  background: linear-gradient(90deg, #5a4650, #8c6c7e 6%, #6b5462 14%, #9a7488 20%, #5c4a54 28%, #8c6a7c 30%, #8c6a7c 36%, #1e1c1e 36.5% 47%, #55454e 47.5%, #6b5562 55%, #9a7488 62% 72%, #262224 72.5% 95%, #8c6a7c 96%, #4a3c44);
}

.window { display: flex; flex-direction: column; min-width: 0; min-height: 0; background: #f0f0f0; border-right: 1px solid #999; }
.titlebar { display: flex; align-items: center; height: 29px; flex: none; background: #fff; color: #999; }
.app-icon { width: 16px; height: 16px; margin-right: 5px; margin-left: -1px; }
.titlebar h1 { font: 400 11px/16px "Noto Sans", "Noto Sans CJK JP", sans-serif; margin: 0; flex: 1; white-space: nowrap; }
.caption-buttons { display: flex; }
.caption-buttons button { width: 46px; height: 29px; display: grid; place-items: center; }
.caption-buttons svg { width: 12px; height: 12px; fill: none; stroke: #888; }
.menubar { display: flex; gap: 16px; height: 19px; padding-top: 1px; flex: none; background: #fff; color: #666; font-feature-settings: "palt"; }
.menubar button { white-space: nowrap; }

.toolbar { display: flex; gap: 2px; flex: none; align-items: center; }
.main-tools { height: 38px; padding: 2px 0 0; margin-left: -4px; }
.sub-tools { height: 36px; padding-bottom: 2px; }
.tool { width: 32px; height: 32px; flex: none; display: grid; place-items: center; }
.tool svg { width: 26px; height: 26px; display: block; }
.tool.on { background: #b3d7f5; border: 1px solid #0078d7; }
.sep { flex: none; position: relative; width: 7px; height: 26px; background: linear-gradient(#a8a8a8, #a8a8a8) center / 1px 100% no-repeat; }

.combo { position: relative; display: flex; align-items: center; height: 23px; background: #e2e2e2; border: 1px solid #aaa; font-feature-settings: "palt"; }
.combo select { appearance: none; background: none; border: 0; outline: 0; width: 100%; height: 21px; padding: 0 18px 0 3px; }
.combo::after { content: ""; position: absolute; right: 6px; top: 6px; width: 6px; height: 6px; border: solid #555; border-width: 0 1px 1px 0; transform: rotate(45deg); pointer-events: none; }
.track-combo { width: 168px; border-left: 0; }
.track-combo select { padding-left: 1px; }
.via-combo { width: 223px; }
.grid-combo { width: 225px; }
.zoom-combo { width: 96px; }
.layer-combo { width: 140px; background: #fff; padding-left: 6px; font-size: 12px; }
.swatch { flex: none; width: 14px; height: 12px; border: 1px solid #000; }
.c-edge { height: 14px; background: #c2c200; }

.workspace { position: relative; flex: 1; min-height: 0; display: flex; }
.side-tools { display: flex; flex-direction: column; align-items: center; gap: 2px; padding-top: 5px; flex: none; overflow: hidden; border-bottom: 1px solid #d4d4d4; }
.side-tools .sep { width: 24px; height: 7px; background: linear-gradient(#a8a8a8, #a8a8a8) center / 100% 1px no-repeat; }
.left-tools { width: 27px; align-items: flex-start; }
.left-tools > * { margin-left: -7px; }
.left-tools .sep { margin-left: -3px; }
.right-tools { width: 36px; }
.dots path { fill: none; stroke: #333; stroke-width: 3; stroke-linecap: round; stroke-dasharray: 0 6; }
.nodes { fill: #2db83d; stroke: #667; stroke-width: 1; }
.net-label { font: bold 10px "Noto Sans", sans-serif; fill: #fff; text-anchor: middle; }
.unit { font: 500 15px "Noto Sans", sans-serif; fill: #444; text-anchor: middle; }
.polar { font: bold 13px "DejaVu Sans", sans-serif; fill: #544; }
.theta { font-style: italic; }
.big-t { font: bold 29px "Liberation Serif", serif; fill: #333; text-anchor: middle; }
.dim { font: 13px "Liberation Sans", sans-serif; fill: #222; text-anchor: middle; }

.board-area { flex: 1; min-width: 0; display: flex; flex-direction: column; border-left: 1px solid #fff; border-top: 1px solid #fff; }
.board { display: block; flex: 1; min-height: 0; width: 100%; background: #000; }
.board-text { font: 22px "DejaVu Sans Mono", monospace; fill: #848484; text-anchor: middle; }
.board-text .silk { fill: #008484; }
.board-text .conn { font-size: 21px; }

.scroll { display: flex; flex: none; }
.scroll button { width: 16px; height: 16px; display: grid; place-items: center; }
.scroll svg { width: 10px; height: 10px; fill: none; stroke: #555; stroke-width: 2; }
.thumb { background: #cdcdcd; }
.hscroll { height: 18px; align-items: center; }
.hscroll .thumb { width: 17px; height: 16px; }
.hscroll .before { flex: 477; }
.hscroll .after { flex: 362; }
.vscroll { width: 18px; flex-direction: column; padding: 2px 0 18px 1px; }
.vscroll .thumb { width: 15px; height: 17px; }
.vscroll .before { flex: 364; }
.vscroll .after { flex: 311; }

.layers { width: 210px; flex: none; border-left: 4px solid #dadada; display: flex; flex-direction: column; }
.layers h2 { margin: 0; padding-left: 4px; height: 17px; font: 10px/14px "Noto Sans CJK JP", sans-serif; background: linear-gradient(90deg, #b8b8b8, #dcdcdc); border-bottom: 1px solid #aaa; }
.tabs { display: flex; height: 28px; padding: 4px 0 3px 5px; border-left: 1px solid #aaa; border-bottom: 1px solid #b0b0b0; background: linear-gradient(#c8c8c8, #efefef 80%); }
.tabs button { padding: 0 5px; border: 1px solid #aaa; border-bottom: 0; border-radius: 3px 3px 0 0; font-feature-settings: "palt"; background: linear-gradient(#ddd, #f0f0f0); }
.tabs .active { background: #fff; padding: 0 6px; }
.layer-list { flex: 1; padding: 2px 0 0 14px; border-left: 1px solid #aaa; }
.layer-list label { position: relative; display: flex; align-items: center; height: 16px; gap: 1px; }
.layer-list input { appearance: none; position: relative; width: 13px; height: 13px; margin-right: 2px; background: #fff; border: 1px solid #333; }
.layer-list input:checked::before { content: ""; position: absolute; left: 3px; top: 1px; width: 9px; height: 4px; border: solid #333; border-width: 0 0 1px 1px; transform: translate(-2px, 1px) rotate(-45deg); }
.current::before { content: ""; position: absolute; left: -7px; top: 3px; border: solid transparent; border-width: 5px 0 5px 5px; border-left-color: #4040e8; }
.ink { position: absolute; inset: 0; width: 100%; height: 100%; pointer-events: none; fill: none; stroke: #0000f4; stroke-width: 2; stroke-linecap: round; stroke-linejoin: round; }

.message-panel { margin: 0; height: 30px; flex: none; display: grid; grid-template-columns: 55px 58px 109px 65px 67px 1fr; padding-left: 2px; line-height: 15px; font-feature-settings: "palt"; }
.message-panel dd { margin: 0; }
.message-panel dt { white-space: nowrap; }
.statusbar { position: relative; display: grid; grid-template-columns: 262px 66px 172px 263px 196px 43px 1fr; height: 23px; flex: none; border-top: 1px solid #d4d4d4; line-height: 22px; }
.statusbar span { padding-left: 4px; border-left: 1px solid #d7d7d7; white-space: nowrap; }
.statusbar span:first-child { padding-left: 0; border-left: 0; }
.grip { position: absolute; right: 1px; bottom: 1px; width: 10px; height: 10px; fill: #bbb; }
```
